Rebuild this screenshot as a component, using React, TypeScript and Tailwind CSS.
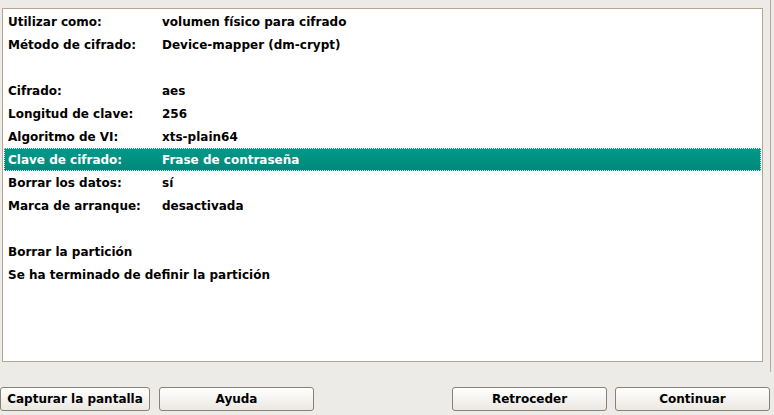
const rows: { label?: string; value?: string; selected?: boolean }[] = [
  { label: "Utilizar como:", value: "volumen físico para cifrado" },
  { label: "Método de cifrado:", value: "Device-mapper (dm-crypt)" },
  {},
  { label: "Cifrado:", value: "aes" },
  { label: "Longitud de clave:", value: "256" },
  { label: "Algoritmo de VI:", value: "xts-plain64" },
  { label: "Clave de cifrado:", value: "Frase de contraseña", selected: true },
  { label: "Borrar los datos:", value: "sí" },
  { label: "Marca de arranque:", value: "desactivada" },
  {},
  { label: "Borrar la partición" },
  { label: "Se ha terminado de definir la partición" },
];

function Button({ label, className }: { label: string; className: string }) {
  return (
    <button
      className={`h-[24px] rounded-[3px] border border-[#8a8172] bg-gradient-to-b from-[#ffffff] to-[#ebe8e3] text-[12px] font-bold text-black ${className}`}
    >
      {label}
    </button>
  );
}

export default function App() {
  return (
    <div
      className="w-[774px] h-[415px] overflow-hidden bg-[#edebe7] text-black"
      style={{ fontFamily: '"DejaVu Sans", Verdana, sans-serif' }}
    >
      <div className="h-[372px] w-[771px] border-r border-[#b9aa92] pt-[8px] pl-[2px] pr-[7px]">
        <div className="h-[354px] border border-[#b3a58e] bg-white pt-[1px] px-[1px]">
          {rows.map((row, i) => (
            <div
              key={i}
              className={`flex h-[23px] items-center text-[12px] font-bold ${
                row.selected
                  ? "bg-gradient-to-b from-[#009a89] to-[#00877a] text-white outline outline-1 outline-dotted outline-[#d8f0ec] -outline-offset-1"
                  : ""
              }`}
            >
              {row.label && (
                <span className={row.value ? "w-[158px] shrink-0 pl-[4px]" : "pl-[4px]"}>{row.label}</span>
              )}
              {row.value && <span>{row.value}</span>}
            </div>
          ))}
        </div>
      </div>
      <div className="flex items-start pt-[15px]">
        <Button label="Capturar la pantalla" className="w-[150px]" />
        <Button label="Ayuda" className="ml-[9px] w-[155px]" />
        <Button label="Retroceder" className="ml-[138px] w-[155px]" />
        <Button label="Continuar" className="ml-[8px] w-[155px]" />
      </div>
    </div>
  );
}
